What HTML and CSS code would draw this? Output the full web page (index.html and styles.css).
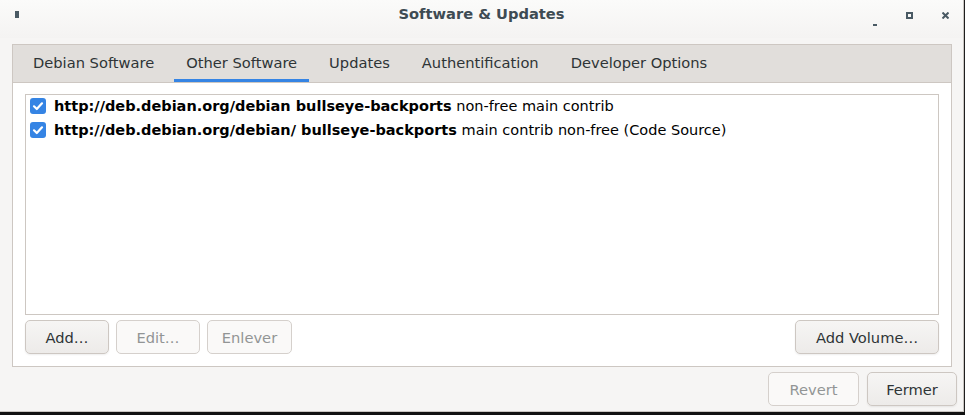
FILE: index.html
```html
<!DOCTYPE html>
<html>
<head>
<meta charset="utf-8">
<link rel="stylesheet" href="styles.css">
</head>
<body>
<div class="window">
  <div class="titlebar">
    <span class="menu-icon"></span>
    <span class="title">Software &amp; Updates</span>
    <div class="controls">
      <span class="ctl-min"></span>
      <span class="ctl-max"></span>
      <svg class="ctl-close" width="7" height="7" viewBox="0 0 7 7"><path d="M0.5 0.5 L6.5 6.5 M6.5 0.5 L0.5 6.5" stroke="#4a5a64" stroke-width="2"/></svg>
    </div>
  </div>
  <div class="body">
    <div class="notebook">
      <div class="tabs">
        <div class="tab">Debian Software</div>
        <div class="tab active">Other Software</div>
        <div class="tab">Updates</div>
        <div class="tab">Authentification</div>
        <div class="tab">Developer Options</div>
      </div>
      <div class="page">
        <div class="list">
          <div class="row">
            <span class="check"><svg width="16" height="16" viewBox="0 0 16 16"><path d="M4 8.3 L6.8 11 L12 5.3" fill="none" stroke="#fff" stroke-width="2.2" stroke-linecap="round" stroke-linejoin="round"/></svg></span>
            <span class="label"><b>http://deb.debian.org/debian bullseye-backports</b> non-free main contrib</span>
          </div>
          <div class="row">
            <span class="check"><svg width="16" height="16" viewBox="0 0 16 16"><path d="M4 8.3 L6.8 11 L12 5.3" fill="none" stroke="#fff" stroke-width="2.2" stroke-linecap="round" stroke-linejoin="round"/></svg></span>
            <span class="label"><b>http://deb.debian.org/debian/ bullseye-backports</b> main contrib non-free (Code Source)</span>
          </div>
        </div>
        <div class="btnrow">
          <button class="btn w-add">Add…</button>
          <button class="btn w-edit" disabled>Edit…</button>
          <button class="btn w-rem" disabled>Enlever</button>
          <span class="spacer"></span>
          <button class="btn w-vol">Add Volume…</button>
        </div>
      </div>
    </div>
    <div class="actions">
      <button class="btn w-rev" disabled>Revert</button>
      <button class="btn w-close">Fermer</button>
    </div>
  </div>
</div>
<div class="under"></div>
</body>
</html>
```
FILE: styles.css
```css
html, body {
  margin: 0;
  padding: 0;
}
body {
  background: #1e1e1e;
  width: 965px;
  height: 415px;
  overflow: hidden;
  font-family: "DejaVu Sans", "Noto Sans", sans-serif;
  font-size: 14.67px;
  color: #2e3436;
}
.window {
  width: 963px;
  height: 411px;
  background: #f6f5f4;
  border-right: 1px solid #c9c5c1;
  border-bottom: 1px solid #c9c5c1;
  display: flex;
  flex-direction: column;
}
.titlebar {
  height: 38px;
  display: flex;
  align-items: center;
  position: relative;
  background: linear-gradient(#fbfbfa, #f4f3f2);
}
.menu-icon {
  width: 4px;
  height: 7px;
  background: #4a5a64;
  margin-left: 15px;
  margin-top: -9px;
}
.title {
  position: absolute;
  left: 0;
  right: 0;
  top: 5px;
  text-align: center;
  font-weight: bold;
  font-size: 14.67px;
  color: #3e4b53;
}
.controls {
  margin-left: auto;
  display: flex;
  align-items: flex-start;
  height: 38px;
}
.ctl-min {
  width: 4px;
  height: 2px;
  background: #4a5a64;
  margin-top: 24px;
  margin-right: 29px;
}
.ctl-max {
  width: 3px;
  height: 3px;
  border: 2px solid #4a5a64;
  margin-top: 12px;
  margin-right: 29px;
}
.ctl-close {
  margin-top: 12px;
  margin-right: 14px;
}
.body {
  flex: 1;
  padding: 6px 11px 0 12px;
  display: flex;
  flex-direction: column;
}
.notebook {
  border: 1px solid #cdc7c2;
  background: #ffffff;
  height: 321px;
  display: flex;
  flex-direction: column;
}
.tabs {
  height: 37px;
  background: #e1dedb;
  border-bottom: 1px solid #cdc7c2;
  display: flex;
  padding-left: 8px;
  gap: 8px;
}
.tab {
  padding: 0 12px;
  line-height: 35px;
  color: #2e3436;
  box-sizing: border-box;
  height: 37px;
}
.tab.active {
  border-bottom: 3px solid #3584e4;
}
.page {
  flex: 1;
  padding: 11px 12px 12px 12px;
  display: flex;
  flex-direction: column;
  gap: 5px;
}
.list {
  height: 221px;
  box-sizing: border-box;
  border: 1px solid #cdc7c2;
  background: #ffffff;
}
.row {
  height: 24px;
  box-sizing: border-box;
  padding-bottom: 2px;
  display: flex;
  align-items: center;
  padding-left: 4px;
}
.check {
  width: 16px;
  height: 16px;
  border-radius: 3px;
  background: #3584e4;
  display: flex;
  margin-right: 8px;
}
.label {
  color: #000;
  white-space: nowrap;
  font-size: 14.5px;
}
.label b {
  font-weight: bold;
}
.btnrow {
  display: flex;
  gap: 7px;
}
.spacer {
  flex: 1;
}
.btn {
  height: 34px;
  box-sizing: border-box;
  border: 1px solid #cdc7c2;
  border-radius: 5px;
  background: linear-gradient(#f6f5f4, #edebe9);
  font-family: "DejaVu Sans", "Noto Sans", sans-serif;
  font-size: 14.67px;
  color: #2e3436;
  padding: 0;
  box-shadow: 0 1px 2px rgba(0,0,0,0.07);
}
.btn:disabled {
  background: #faf9f8;
  color: #929595;
  box-shadow: none;
  border-color: #d5d0cc;
}
.w-add { width: 84px; }
.w-edit { width: 84px; }
.w-rem { width: 85px; }
.w-vol { width: 144px; }
.actions {
  display: flex;
  justify-content: flex-end;
  gap: 8px;
  margin-top: 5px;
  margin-right: -5px;
}
.w-rev { width: 91px; }
.w-close { width: 90px; }
.under {
  height: 3px;
  background: #111;
}
```
